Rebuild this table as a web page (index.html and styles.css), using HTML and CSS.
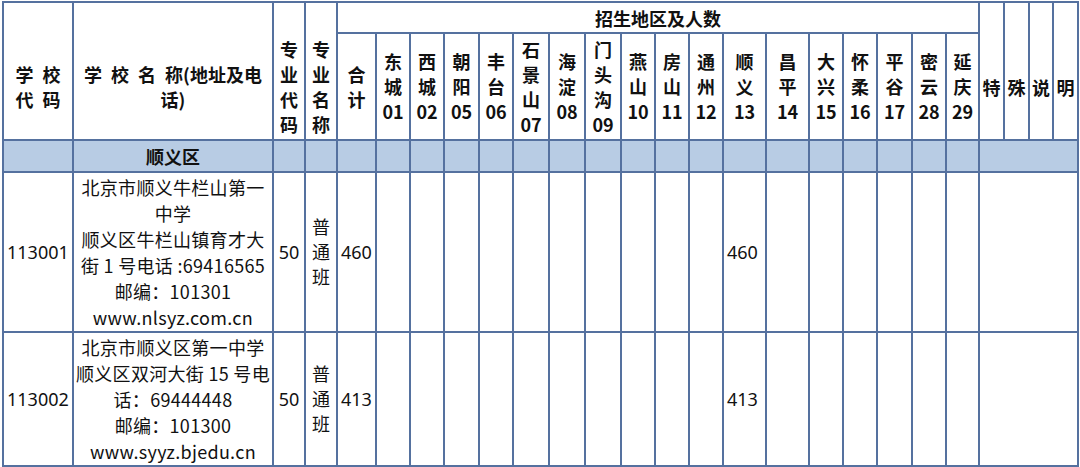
FILE: index.html
```html
<!DOCTYPE html>
<html lang="zh-CN">
<head>
<meta charset="utf-8">
<title>招生计划</title>
<link rel="stylesheet" href="styles.css">
</head>
<body>
<table class="plan">
  <colgroup>
    <col class="w70"><col class="w200"><col class="w32"><col class="w32"><col class="w39">
    <col class="w34"><col class="w34"><col class="w35"><col class="w34"><col class="w36"><col class="w36"><col class="w36">
    <col class="w34"><col class="w34"><col class="w34"><col class="w43"><col class="w43"><col class="w34"><col class="w34">
    <col class="w35"><col class="w34"><col class="w33">
    <col class="w25"><col class="w25"><col class="w24"><col class="w25">
  </colgroup>
  <thead>
    <tr class="h1">
      <th rowspan="2" class="hd tall">学&ensp;校<br>代&ensp;码</th>
      <th rowspan="2" class="hd tall">学&ensp;校&ensp;名&ensp;称(地址及电<br>话)</th>
      <th rowspan="2" class="hd tall">专<br>业<br>代<br>码</th>
      <th rowspan="2" class="hd tall">专<br>业<br>名<br>称</th>
      <th colspan="18" class="hd area">招生地区及人数</th>
      <th rowspan="2" class="hd tall">特</th>
      <th rowspan="2" class="hd tall">殊</th>
      <th rowspan="2" class="hd tall">说</th>
      <th rowspan="2" class="hd tall">明</th>
    </tr>
    <tr class="h2">
      <th class="hd">合<br>计</th>
      <th class="hd">东<br>城<br>01</th>
      <th class="hd">西<br>城<br>02</th>
      <th class="hd">朝<br>阳<br>05</th>
      <th class="hd">丰<br>台<br>06</th>
      <th class="hd">石<br>景<br>山<br>07</th>
      <th class="hd">海<br>淀<br>08</th>
      <th class="hd">门<br>头<br>沟<br>09</th>
      <th class="hd">燕<br>山<br>10</th>
      <th class="hd">房<br>山<br>11</th>
      <th class="hd">通<br>州<br>12</th>
      <th class="hd">顺<br>义<br>13</th>
      <th class="hd">昌<br>平<br>14</th>
      <th class="hd">大<br>兴<br>15</th>
      <th class="hd">怀<br>柔<br>16</th>
      <th class="hd">平<br>谷<br>17</th>
      <th class="hd">密<br>云<br>28</th>
      <th class="hd">延<br>庆<br>29</th>
    </tr>
  </thead>
  <tbody>
    <tr class="region">
      <td></td>
      <td class="hd">顺义区</td>
      <td></td><td></td><td></td>
      <td></td><td></td><td></td><td></td><td></td><td></td><td></td>
      <td></td><td></td><td></td><td></td><td></td><td></td><td></td>
      <td></td><td></td><td></td>
      <td colspan="4"></td>
    </tr>
    <tr class="r1">
      <td class="num">113001</td>
      <td class="name">北京市顺义牛栏山第一<br>中学<br>顺义区牛栏山镇育才大<br>街 1 号电话 :69416565<br>邮编：101301<br>www.nlsyz.com.cn</td>
      <td class="mid">50</td>
      <td class="mid">普<br>通<br>班</td>
      <td class="num">460</td>
      <td></td><td></td><td></td><td></td><td></td><td></td><td></td>
      <td></td><td></td><td></td>
      <td class="num">460</td>
      <td></td><td></td><td></td><td></td><td></td><td></td>
      <td colspan="4"></td>
    </tr>
    <tr class="r2">
      <td class="num">113002</td>
      <td class="name">北京市顺义区第一中学<br>顺义区双河大街 15 号电<br>话：69444448<br>邮编：101300<br>www.syyz.bjedu.cn</td>
      <td class="mid">50</td>
      <td class="mid">普<br>通<br>班</td>
      <td class="num">413</td>
      <td></td><td></td><td></td><td></td><td></td><td></td><td></td>
      <td></td><td></td><td></td>
      <td class="num">413</td>
      <td></td><td></td><td></td><td></td><td></td><td></td>
      <td colspan="4"></td>
    </tr>
  </tbody>
</table>
</body>
</html>
```

FILE: styles.css
```css
html, body {
  margin: 0;
  padding: 0;
  background: #ffffff;
}
body {
  padding: 1px 0 0 2px;
  font-family: "Noto Sans", "Noto Sans CJK SC", sans-serif;
  color: #111111;
}
.plan {
  border-collapse: collapse;
  table-layout: fixed;
  width: 1077px;
}
.plan td, .plan th {
  border: 2px solid #55719f;
  padding: 0;
  overflow: hidden;
  white-space: nowrap;
}
.w70 { width: 70px; }
.w200 { width: 200px; }
.w32 { width: 32px; }
.w39 { width: 39px; }
.w33 { width: 33px; }
.w34 { width: 34px; }
.w35 { width: 35px; }
.w36 { width: 36px; }
.w43 { width: 43px; }
.w24 { width: 24px; }
.w25 { width: 25px; }

.plan .hd {
  font-family: "Noto Sans CJK SC", sans-serif;
  font-weight: 700;
  font-size: 18px;
  line-height: 25px;
  text-align: center;
  vertical-align: middle;
  color: #111111;
}
.plan .tall {
  padding-top: 32px;
}
.plan .area {
  line-height: 28px;
}
.h1 { height: 31px; }
.h2 { height: 107px; }
.region { height: 32px; background: #b8cce4; }
.r1 { height: 160px; }
.r2 { height: 134px; }

.plan .name {
  font-family: "Noto Sans CJK SC", sans-serif;
  font-size: 18px;
  line-height: 26px;
  text-align: center;
  vertical-align: middle;
  letter-spacing: 0.3px;
}
.plan .num {
  font-size: 18px;
  text-align: left;
  padding-left: 3px;
  vertical-align: middle;
}
.plan .mid {
  font-family: "Noto Sans", "Noto Sans CJK SC", sans-serif;
  font-size: 18px;
  line-height: 25px;
  text-align: center;
  vertical-align: middle;
}
```
